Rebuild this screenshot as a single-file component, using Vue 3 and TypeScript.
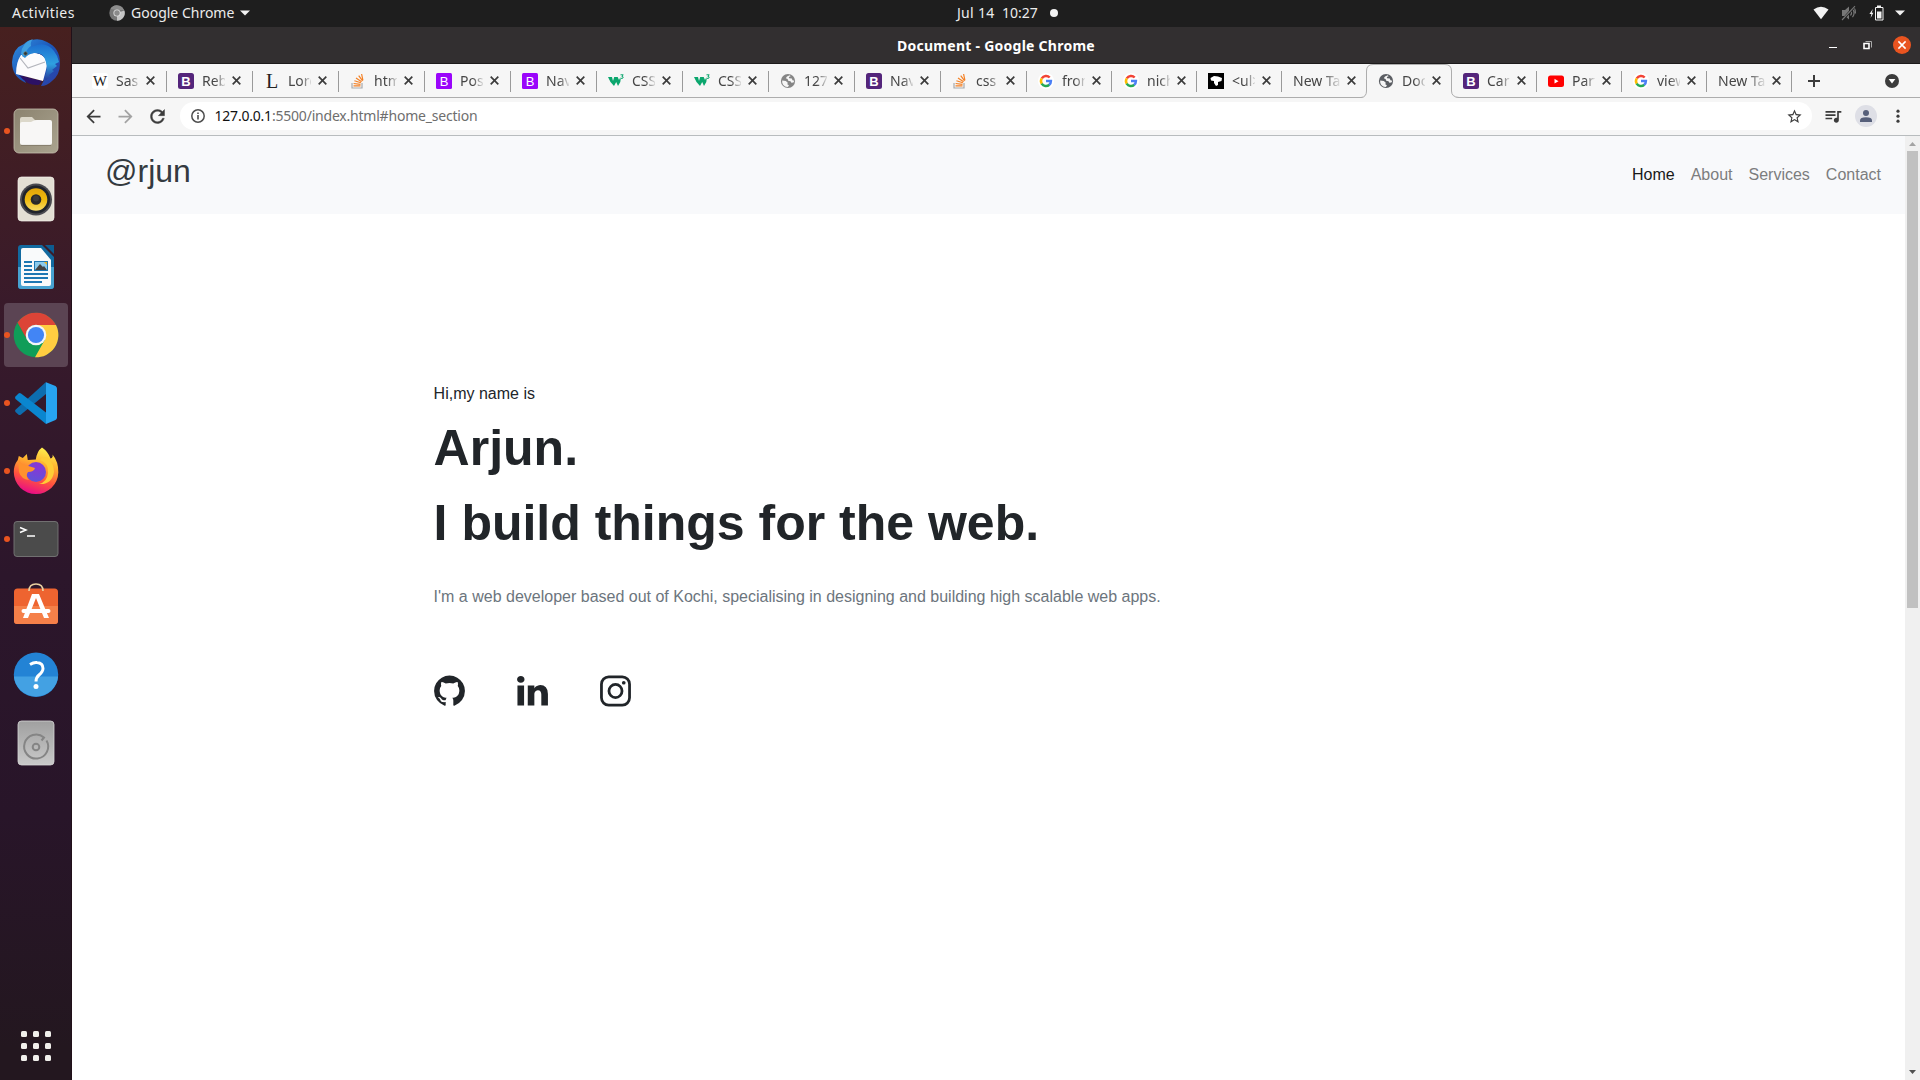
<script setup lang="ts">
interface Tab {
  title: string
  icon: string
  width: number
  active?: boolean
  last?: boolean
}

const tabs: Tab[] = [
  { title: 'Sass', icon: 'wiki', width: 86 },
  { title: 'Rebo', icon: 'boot', width: 86 },
  { title: 'Lore', icon: 'lorem', width: 86 },
  { title: 'html', icon: 'stack', width: 86 },
  { title: 'Post', icon: 'boot5', width: 86 },
  { title: 'Navb', icon: 'boot5', width: 86 },
  { title: 'CSS', icon: 'w3', width: 86 },
  { title: 'CSS', icon: 'w3', width: 86 },
  { title: '127.', icon: 'globe', width: 86 },
  { title: 'Navb', icon: 'boot', width: 86 },
  { title: 'css -', icon: 'stack', width: 86 },
  { title: 'fron', icon: 'google', width: 85 },
  { title: 'nich', icon: 'google', width: 85 },
  { title: '<ul>', icon: 'bull', width: 85 },
  { title: 'New Tab', icon: '', width: 85, last: true },
  { title: 'Docu', icon: 'globe', width: 85, active: true },
  { title: 'Care', icon: 'boot', width: 85 },
  { title: 'Parti', icon: 'youtube', width: 85 },
  { title: 'view', icon: 'google', width: 85 },
  { title: 'New Tab', icon: '', width: 85 },
]

const apps = [
  { name: 'thunderbird', running: false },
  { name: 'files', running: true },
  { name: 'rhythmbox', running: false },
  { name: 'writer', running: false },
  { name: 'chrome', running: true },
  { name: 'vscode', running: true },
  { name: 'firefox', running: true },
  { name: 'terminal', running: true },
  { name: 'software', running: false },
  { name: 'help', running: false },
  { name: 'disk', running: false },
]

const links = ['Home', 'About', 'Services', 'Contact']
</script>

<template>
  <div class="desktop">
    <header class="topbar">
      <span class="activities">Activities</span>
      <svg class="app-ico" width="16" height="16" viewBox="0 0 16 16">
        <circle cx="8" cy="8" r="7.7" fill="#777" />
        <path d="M8 8 15.4 5.6A7.7 7.7 0 0 1 8 15.7z" fill="#c4c4c4" />
        <path d="M1.4 4A7.7 7.7 0 0 1 15 5H8z" fill="#8d8d8d" />
        <circle cx="8" cy="8" r="3.6" fill="#ddd" />
        <circle cx="8" cy="8" r="2.7" fill="#8a8a8a" />
      </svg>
      <span class="app-name">Google Chrome</span>
      <svg class="caret" width="10" height="6" viewBox="0 0 10 6"><path d="M0 .5h10L5 5.5z" fill="#f2f2f2" /></svg>
      <span class="date">Jul 14</span>
      <span class="time">10:27</span>
      <i class="notice"></i>
      <div class="tray">
        <svg width="16" height="14" viewBox="0 0 16 14"><path d="M.5 3.6Q8-2.2 15.500 3.600L8 13.300z" fill="#f2f2f2" /></svg>
        <svg class="mute" width="16" height="16" viewBox="0 0 16 16">
          <path d="M1 5h3l4-3.500v13L4 11H1z" fill="#777" />
          <path d="M9.500 5.500q2 2.500 0 5M11.500 3.800q3.200 4.200 0 8.400M13 2.500q1.800 2.500 1.500 6" fill="none" stroke="#777" stroke-width="1.200" />
          <path d="M1.500 15 14 1" stroke="#1e1e1e" stroke-width="2.600" />
          <path d="M1 15 14 1.200" stroke="#777" stroke-width="1.100" />
        </svg>
        <svg class="battery" width="15" height="16" viewBox="0 0 15 16">
          <path d="M3.800 4 .4 9h2L1.600 13 4.400 7.700H2.800z" fill="#f2f2f2" />
          <path d="M6.500 2.500h7.500v12.500h-7.500z" fill="none" stroke="#f2f2f2" />
          <path d="M8 .5h4v2H8zM8 6.500h4.500v7H8z" fill="#f2f2f2" />
        </svg>
        <svg class="tray-caret" width="10" height="6" viewBox="0 0 10 6"><path d="M0 .5h10L5 5.500z" fill="#f2f2f2" /></svg>
      </div>
    </header>

    <div class="workspace">
      <aside class="dock">
        <div v-for="app in apps" :key="app.name" class="cell" :class="{ focused: app.name === 'chrome' }">
          <i v-if="app.running" class="running"></i>
          <svg v-if="app.name === 'thunderbird'" width="48" height="48" viewBox="0 0 48 48">
            <defs>
              <linearGradient id="tb" x1="0" y1="0" x2="1" y2="1"><stop offset="0" stop-color="#2f8fe0" /><stop offset=".5" stop-color="#1c55b8" /><stop offset="1" stop-color="#2d3fa5" /></linearGradient>
              <linearGradient id="tw" x1="0" y1="0" x2="0" y2="1"><stop offset="0" stop-color="#1d6fd0" /><stop offset=".55" stop-color="#2fa0e0" /><stop offset="1" stop-color="#243c9e" /></linearGradient>
            </defs>
            <path d="M20 1q8-2 15 2 13 6 13 21 0 12-8 18-5 5-11 5l3-6-22-6 4 9Q0 38 0 23 1 9 12 5q4-4 8-4z" fill="url(#tb)" />
            <path d="M7 36 30 42l-3 4Q15 47 7 36z" fill="#2c1165" />
            <path d="M14 16q10-5 19 2l2 9-4 15L4 35q0-12 5-19z" fill="#fbfbfd" />
            <path d="m8 19 8 10 17-6" fill="none" stroke="#b3b5bd" stroke-width="1.200" />
            <path d="M17 14q10-2 17 6-1-5-7-8z" fill="#2b1774" />
            <path d="M22 7q12-5 20 5 4 5 5 11l-4 2 2 2-5 4 2 1-5 4 1 2-4 3-2-1q5-11 1-20-3-7-11-6-6 1-9 5l-3-2Q13 8 22 7z" fill="url(#tw)" />
            <path d="M9 15Q10 3 21 0q-3 3-2 7-4 2-7 11z" fill="#3f9fe0" />
            <circle cx="13.500" cy="14.500" r="1.700" fill="#234" stroke="#7d7042" stroke-width=".7" />
          </svg>
          <svg v-else-if="app.name === 'files'" width="48" height="48" viewBox="0 0 48 48">
            <defs><linearGradient id="fl" x1="0" y1="0" x2="1" y2="1"><stop offset="0" stop-color="#8b836f" /><stop offset="1" stop-color="#aaa38f" /></linearGradient></defs>
            <rect x="2" y="2" width="44" height="44" rx="5" fill="url(#fl)" stroke="#c5bfae" stroke-width=".8" />
            <path d="M8 18v-6q0-2 2-2h10l3 3h6v5z" fill="#dcd8ca" />
            <path d="M8 17q0-2 2-2h9q3-2 6-2h13q2 0 2 2v21q0 2-2 2H10q-2 0-2-2z" fill="#f8f7f6" />
            <path d="M9 38.400h30" stroke="#7d7564" stroke-width=".8" />
          </svg>
          <svg v-else-if="app.name === 'rhythmbox'" width="48" height="48" viewBox="0 0 48 48">
            <defs><linearGradient id="rb" x1="0" y1="0" x2="0" y2="1"><stop offset="0" stop-color="#e0a40b" /><stop offset=".5" stop-color="#eeb90c" /><stop offset="1" stop-color="#f8dc65" /></linearGradient></defs>
            <rect x="6" y="2" width="36" height="44" rx="3.500" fill="#e3dfd4" stroke="#f6f4ee" stroke-width=".7" />
            <circle cx="24" cy="24.500" r="16" fill="#4b4b50" /><circle cx="24" cy="24.500" r="14" fill="#20242b" />
            <circle cx="24" cy="24.500" r="11.300" fill="url(#rb)" /><circle cx="24" cy="24.500" r="5.300" fill="#292929" />
            <circle cx="24" cy="23.500" r="3" fill="#3a3a3a" />
          </svg>
          <svg v-else-if="app.name === 'writer'" width="48" height="48" viewBox="0 0 48 48">
            <path d="M9 2h21l12 12v29q0 3-3 3H9q-3 0-3-3V5q0-3 3-3z" fill="#126aa0" />
            <path d="M6 24h36v19q0 3-3 3H9q-3 0-3-3z" fill="#47a2d1" />
            <path d="M11 5h18l10 12v24q0 2-2 2H11q-2 0-2-2V7q0-2 2-2z" fill="#f9fafb" />
            <path d="M33 2h9v9z" fill="#0d5c91" />
            <path d="M12 19h8M12 23h8M12 27h8M12 31h24M12 35h24M12 39h18" stroke="#1d77b3" stroke-width="2" />
            <rect x="22.500" y="18.500" width="13" height="9" fill="#8ccbed" stroke="#1d77b3" />
            <path d="m23 27 5-6 3 3 1-1 3 4z" fill="#444" /><path d="M32 19h3v3z" fill="#f0b31c" />
          </svg>
          <svg v-else-if="app.name === 'chrome'" width="48" height="48" viewBox="0 0 48 48">
            <circle cx="24" cy="24" r="22.300" fill="#109d58" />
            <path d="M5.500 11.500A22.300 22.300 0 0 1 43.900 14H24a10 10 0 0 0-9 14.500z" fill="#dc4437" />
            <path d="M24 14h20A22.300 22.300 0 0 1 23 46.300L33 28.500z" fill="#ffcd41" />
            <path d="m13 25-7-12 8.500 14z" fill="#a83025" />
            <circle cx="24" cy="24" r="10.300" fill="#f3f5f8" /><circle cx="24" cy="24" r="8.100" fill="#4285f5" />
          </svg>
          <svg v-else-if="app.name === 'vscode'" width="48" height="48" viewBox="0 0 48 48">
            <path d="M34 3v12L9 35.500q-1.500 1-2.700 0L3.500 33q-1-1.200 0-2.300z" fill="#0d6daf" />
            <path d="m3.500 17.500 3-3q1.200-.9 2.500 0L34 33.500V45L3.500 20q-1-1.300 0-2.500z" fill="#0a86cf" />
            <path d="M34 3.200 43.500 7Q45 8 45 9.500v29q0 1.500-1.500 2.500L34 45z" fill="#27a4f0" />
          </svg>
          <svg v-else-if="app.name === 'firefox'" width="48" height="48" viewBox="0 0 48 48">
            <defs>
              <linearGradient id="ff" x1=".7" y1="0" x2=".4" y2="1"><stop offset="0" stop-color="#fff44f" /><stop offset=".35" stop-color="#ffb02e" /><stop offset=".68" stop-color="#ff533e" /><stop offset="1" stop-color="#e80b87" /></linearGradient>
              <radialGradient id="fp" cx=".6" cy=".2" r=".9"><stop offset="0" stop-color="#8b35d5" /><stop offset="1" stop-color="#5b55d9" /></radialGradient>
            </defs>
            <path d="M30 .5q6 4 8.500 11 3-1 2-4 6 7 5.800 18A22 22 0 0 1 24 47 22 22 0 0 1 1.800 25q0-7 4-12l1-4 4 2 4-4 1 6 8-.5Q25 4 30 .5z" fill="url(#ff)" />
            <circle cx="24" cy="25" r="10" fill="url(#fp)" />
            <path d="M7 12q1 5 6 6l10 3q-1 4-7 4-3 4 1 8-8-1-10-8-1-7 0-13z" fill="#ff922d" />
            <path d="M28 13q9 3 8 13-1 9-9 11 13 1 15-12 0-8-6-14-5-3-8 2z" fill="#ffcd36" />
          </svg>
          <svg v-else-if="app.name === 'terminal'" width="48" height="48" viewBox="0 0 48 48">
            <rect x="2" y="6.500" width="44" height="35" rx="3" fill="#4b4b4b" stroke="#777" stroke-width=".9" />
            <path d="m8 12.500 6 2.500-6 2.500M15 21h8" fill="none" stroke="#fff" stroke-width="1.500" />
          </svg>
          <svg v-else-if="app.name === 'software'" width="48" height="48" viewBox="0 0 48 48">
            <rect x="2" y="5.500" width="44" height="35.500" rx="3.500" fill="#ee6430" /><path d="M2 23h44v15q0 3-3 3H5q-3 0-3-3z" fill="#f58049" />
            <path d="M17 8q0-7 7-7t7 7" fill="none" stroke="#ead0a1" stroke-width="1.700" />
            <path d="M20 11h7l10 24h-5l-8-20-8 20h-5z" fill="#fff" />
            <rect x="9.500" y="26" width="29" height="4" rx="2" fill="#fff" />
          </svg>
          <svg v-else-if="app.name === 'help'" width="48" height="48" viewBox="0 0 48 48">
            <circle cx="24" cy="23.700" r="22.200" fill="#2383d5" /><path d="M1.900 25.500h44.200a22.200 22.200 0 0 1-44.200 0z" fill="#43a1e3" />
            <path d="M18 13.500q4-2.500 7-2 6 .5 6 6 0 3-4 6.500-3 2.500-3 6.500" fill="none" stroke="#fff" stroke-width="3" /><circle cx="24" cy="35.500" r="2.500" fill="#fff" />
          </svg>
          <svg v-else width="48" height="48" viewBox="0 0 48 48">
            <defs><linearGradient id="dk" x1="0" y1="0" x2="0" y2="1"><stop offset="0" stop-color="#a0a0a0" /><stop offset="1" stop-color="#c9c9c9" /></linearGradient></defs>
            <rect x="6" y="2" width="36" height="44" rx="3.500" fill="url(#dk)" stroke="#d5d5d5" stroke-width=".8" />
            <path d="M34.500 21.500A12 12 0 1 1 32 18.500l-2.500 3" fill="none" stroke="#858585" stroke-width="2" />
            <circle cx="24" cy="28" r="3.300" fill="none" stroke="#858585" stroke-width="2" />
          </svg>
        </div>
        <div class="grid"><i v-for="n in 9" :key="n"></i></div>
      </aside>

      <main class="window">
        <div class="titlebar">
          <span class="title">Document - Google Chrome</span>
          <div class="controls">
            <i class="min"></i>
            <svg class="restore" width="9" height="9" viewBox="0 0 9 9"><path d="M1 2.500h5v5H1z" fill="none" stroke="#fff" stroke-width="1.600" /><path d="M2.500.5h6v6" fill="none" stroke="#aaa" /></svg>
            <svg width="18" height="18" viewBox="0 0 18 18"><circle cx="9" cy="9" r="9" fill="#e95420" /><path d="m5.400 5.400 7.200 7.200m0-7.200-7.200 7.200" stroke="#fff" stroke-width="1.500" /></svg>
          </div>
        </div>

        <div class="tabstrip">
          <div
            v-for="(tab, i) in tabs"
            :key="i"
            class="tab"
            :class="{ active: tab.active, bare: !tab.icon, nosep: tab.last || tab.active }"
            :style="{ width: tab.width + 'px' }"
          >
            <svg v-if="tab.active" class="outline" width="98" height="34" viewBox="0 0 98 34">
              <path d="M0 34Q5.500 33 5.500 27V7Q5.500.5 12 .5h72Q90.500.5 90.500 7v20q0 6 7.500 7z" fill="#f6f6f6" />
              <path d="M0 33.500Q5.500 33 5.500 27V7Q5.500.5 12 .5h72Q90.500.5 90.500 7v20q0 6 7.500 6.500" fill="none" stroke="#adadad" />
            </svg>
            <svg v-if="tab.icon" class="fav" width="16" height="16" viewBox="0 0 16 16">
              <template v-if="tab.icon === 'wiki'"><rect width="16" height="16" rx="3" fill="#fff" /><text x="8" y="13" text-anchor="middle" class="serif" font-size="14.500" textLength="14" lengthAdjust="spacingAndGlyphs">W</text></template>
              <template v-else-if="tab.icon === 'boot'"><rect width="16" height="16" rx="2.500" fill="#54257b" /><text x="8" y="12.700" text-anchor="middle" class="b" font-weight="700">B</text></template>
              <template v-else-if="tab.icon === 'boot5'"><rect width="16" height="16" rx="1.500" fill="#9a05fb" /><text x="8" y="12.700" text-anchor="middle" class="b">B</text></template>
              <text v-else-if="tab.icon === 'lorem'" x="8" y="14.500" text-anchor="middle" class="serif" font-size="20">L</text>
              <template v-else-if="tab.icon === 'stack'">
                <path d="M2 10v5h10v-5" fill="none" stroke="#a7a9ac" stroke-width="1.200" />
                <path d="M3.500 12.900h7M3.600 10.500l6.900.8M4.400 7.800l6.500 2M6 5l5.600 3.700M8.700 2.600l3.900 5.300M11.600 1l1.300 6.400" stroke="#f48024" stroke-width="1.200" />
              </template>
              <template v-else-if="tab.icon === 'w3'">
                <path d="M0 4h4l1 4 1.200-4h3.500L11 7l1-2 .7 1-.4 3L10 13 8.200 9 6 13 2.500 9z" fill="#0aa66d" /><path d="M12.500 1.800h2.700l-1.300 1.600q1.700.2 1.200 1.400-.9 1.200-2.600.3" fill="none" stroke="#0aa66d" />
              </template>
              <template v-else-if="tab.icon === 'globe'">
                <circle cx="8" cy="8" r="7.100" :fill="tab.active ? '#5b5e63' : '#858585'" />
                <path d="M9.800 2.200 7 3.500 5.800 5.300l1.800.7.6 1.800 2.300.4.900 1.600 2-.3 1-1.800-1.900-.5-.7-1.700-2.600-.3-.4-1.300 1.800-.7z" fill="#f6f6f6" />
                <path d="M2.200 7.500l3.600.5 2 1.700-.5 1.500 1.600 1-.9 1.900q-4.800-.3-5.800-4.600z" fill="#f6f6f6" />
              </template>
              <template v-else-if="tab.icon === 'google'">
                <circle cx="8" cy="8" r="8" fill="#fff" />
                <g fill="none" stroke-width="2.500"><path d="M3.800 5.400A5 5 0 0 1 11.700 4.500" stroke="#f24335" /><path d="M3.800 5.300a5 5 0 0 0 0 5.400" stroke="#fbbc05" /><path d="M3.700 10.600a5 5 0 0 0 7.600 1.100" stroke="#25a955" /><path d="M8 8h4.900q0 2.500-1.700 3.900" stroke="#4a7ff5" /></g>
              </template>
              <template v-else-if="tab.icon === 'bull'"><path d="M0 0h16v16H0z" /><path d="M2.500 5 6 3l4 .5L14 5l-.5 3-3.500 1v3l-2 1-2-3V8L3 7.500z" fill="#fff" /></template>
              <template v-else><rect y="2.500" width="16" height="11.500" rx="2.500" fill="#f00" /><path d="m6.500 5.800 4 2.400-4 2.400z" fill="#fff" /></template>
            </svg>
            <span class="label">{{ tab.title }}</span>
            <svg class="close" width="9" height="9" viewBox="0 0 9 9"><path d="m.7.7 7.600 7.600m0-7.600L.7 8.300" stroke="#3c3c3c" stroke-width="1.700" /></svg>
          </div>
          <svg class="plus" width="12" height="12" viewBox="0 0 12 12"><path d="M0 6h12M6 0v12" stroke="#3c3c3c" stroke-width="2" /></svg>
          <svg class="search-tabs" width="14" height="14" viewBox="0 0 14 14"><circle cx="7" cy="7" r="7" fill="#3c3c3c" /><path d="M3.600 5h6.800L7 9.500z" fill="#fff" /></svg>
        </div>

        <div class="toolbar">
          <svg class="nav-ico" width="21" height="21" viewBox="0 0 24 24"><path d="M20 11H7.830l5.590-5.590L12 4l-8 8 8 8 1.410-1.410L7.830 13H20v-2z" fill="#3c3c3c" /></svg>
          <svg class="nav-ico" width="21" height="21" viewBox="0 0 24 24"><path d="m12 4-1.410 1.410L16.170 11H4v2h12.170l-5.580 5.590L12 20l8-8z" fill="#a3a3a3" /></svg>
          <svg class="nav-ico" width="21" height="21" viewBox="0 0 24 24"><path d="M17.650 6.350C16.200 4.900 14.210 4 12 4c-4.420 0-7.990 3.580-7.990 8s3.570 8 7.990 8c3.730 0 6.840-2.550 7.730-6h-2.080c-.82 2.330-3.040 4-5.650 4-3.310 0-6-2.690-6-6s2.690-6 6-6c1.660 0 3.140.69 4.220 1.780L13 11h7V4l-2.350 2.350z" fill="#3c3c3c" stroke="#3c3c3c" stroke-width=".5" /></svg>
          <div class="omnibox">
            <svg width="14" height="14" viewBox="0 0 14 14"><circle cx="7" cy="7" r="6.200" fill="none" stroke="#4e4e4e" stroke-width="1.500" /><path d="M7 6v4.500M7 3.500v1.600" stroke="#4e4e4e" stroke-width="1.600" /></svg>
            <span class="host">127.0.0.1</span><span class="path">:5500/index.html#home_section</span>
            <svg class="star" width="17" height="17" viewBox="0 0 24 24"><path d="m22 9.240-7.190-.62L12 2 9.190 8.630 2 9.240l5.460 4.730L5.820 21 12 17.270 18.180 21l-1.630-7.030L22 9.240zM12 15.400l-3.760 2.270 1-4.280-3.320-2.880 4.380-.38L12 6.100l1.710 4.040 4.380.38-3.320 2.880 1 4.280L12 15.400z" fill="#3c3c3c" /></svg>
          </div>
          <svg class="media" width="20" height="20" viewBox="0 0 24 24"><path d="M15 6H3v2h12V6zm0 4H3v2h12v-2zM3 16h8v-2H3v2zM17 6v8.180c-.31-.11-.65-.18-1-.18-1.660 0-3 1.340-3 3s1.340 3 3 3 3-1.340 3-3V8h3V6h-5z" fill="#3c3c3c" /></svg>
          <svg class="avatar" width="22" height="22" viewBox="0 0 22 22"><circle cx="11" cy="11" r="11" fill="#dedfe6" /><circle cx="11" cy="8" r="3" fill="#565f7a" /><path d="M5 17v-1.500Q5 12.300 11 12.300t6 3.200V17z" fill="#565f7a" /></svg>
          <svg class="menu" width="4" height="14" viewBox="0 0 4 14"><g fill="#3c3c3c"><circle cx="2" cy="2.200" r="1.600" /><circle cx="2" cy="7.200" r="1.600" /><circle cx="2" cy="12.200" r="1.600" /></g></svg>
        </div>

        <div class="viewport">
          <div class="page">
            <nav class="navbar">
              <span class="brand">@rjun</span>
              <div class="links"><a v-for="(link, i) in links" :key="link" :class="{ current: i === 0 }">{{ link }}</a></div>
            </nav>
            <section class="hero">
              <p class="hi">Hi,my name is</p>
              <h1>Arjun.</h1>
              <h1>I build things for the web.</h1>
              <p class="bio">I'm a web developer based out of Kochi, specialising in designing and building high scalable web apps.</p>
              <div class="social">
                <svg width="31" height="36" viewBox="128 0 1536 1792"><path fill="#212529" d="M1664 896q0 251-146.500 451.500t-378.500 277.500q-27 5-40-7t-13-30q0-3 .5-76.500t.5-134.500q0-97-52-142 57-6 102.500-18t94-39 81-66.500 53-105 20.500-150.500q0-119-79-206 37-91-8-204-28-9-81 11t-92 44l-38 24q-93-26-192-26t-192 26q-16-11-42.500-27t-83.500-38.500-85-13.500q-45 113-8 204-79 87-79 206 0 85 20.500 150t52.500 105 80.500 67 94 39 102.500 18q-39 36-49 103-21 10-45 15t-57 5-65.500-21.500-55.500-62.500q-19-32-48.500-52t-49.500-24l-20-3q-21 0-29 4.500t-5 11.500 9 14 13 12l7 5q22 10 43.500 38t31.500 51l10 23q13 38 44 61.500t67 30 69.500 7 55.500-3.500l23-4q0 38 .5 88.500t.5 54.500q0 18-13 30t-40 7q-232-77-378.500-277.500t-146.500-451.500q0-209 103-385.500t279.500-279.500 385.500-103 385.500 103 279.500 279.500 103 385.500z" /></svg>
                <svg width="31" height="36" viewBox="128 0 1536 1792"><path fill="#212529" d="M477 625v991h-330v-991h330zm21-306q1 73-50.500 122t-135.500 49h-2q-82 0-132-49t-50-122q0-74 51.500-122.500t134.500-48.500 133 48.500 51 122.500zm1166 729v568h-329v-530q0-105-40.500-164.500t-126.500-59.500q-63 0-105.500 34.500t-63.500 85.500q-11 30-11 81v553h-329q2-399 2-647t-1-296l-1-48h329v144h-2q20-32 41-56t56.500-52 87-43.500 114.500-15.500q171 0 275 113.500t104 332.500z" /></svg>
                <svg width="31" height="36" viewBox="128 0 1536 1792"><g fill="none" stroke="#212529"><rect x="197" y="197" width="1398" height="1398" rx="360" stroke-width="138" /><circle cx="896" cy="896" r="325" stroke-width="138" /></g><circle cx="1306" cy="486" r="92" fill="#212529" /></svg>
              </div>
            </section>
          </div>
          <div class="scrollbar">
            <svg class="up" width="7" height="4" viewBox="0 0 7 4"><path d="M3.500 0 7 4H0z" fill="#a3a3a3" /></svg>
            <div class="thumb"></div>
            <svg class="down" width="7" height="4" viewBox="0 0 7 4"><path d="M0 0h7L3.500 4z" fill="#505050" /></svg>
          </div>
        </div>
      </main>
    </div>
  </div>
</template>

<style>
body {
  margin: 0;
  overflow: hidden;
}
</style>

<style scoped>
* {
  box-sizing: border-box;
}
svg {
  display: block;
  flex: none;
}
.desktop {
  width: 1920px;
  height: 1080px;
  display: flex;
  flex-direction: column;
  font-family: 'Noto Sans', 'Open Sans', sans-serif;
  overflow: hidden;
}
.topbar {
  height: 27px;
  flex: none;
  display: flex;
  align-items: center;
  background: #1e1e1e;
  color: #ececec;
  font-size: 14px;
  line-height: 24px;
  padding-bottom: 1px;
  white-space: pre;
}
.activities {
  width: 97px;
  padding-left: 12px;
  letter-spacing: 0.45px;
}
.app-ico {
  margin-left: 12px;
}
.app-name {
  width: 104px;
  margin-left: 6px;
}
.caret {
  margin-left: 5px;
}
.date {
  width: 45px;
  margin-left: 707px;
  letter-spacing: 0.3px;
}
.time {
  width: 48px;
}
.notice {
  width: 8px;
  height: 8px;
  border-radius: 50%;
  background: #f2f2f2;
}
.tray {
  margin-left: auto;
  margin-right: 15px;
  display: flex;
  align-items: center;
}
.mute {
  margin-left: 12px;
}
.battery {
  margin-left: 12px;
}
.tray-caret {
  margin-left: 11px;
}
.workspace {
  flex: 1;
  display: flex;
  min-height: 0;
}
.dock {
  width: 72px;
  flex: none;
  padding-top: 2px;
  display: flex;
  flex-direction: column;
  background: linear-gradient(#47201f, #381a2b 28%, #2c162b 52%, #281529 75%, #23171f 97%);
  border-right: 1px solid #211019;
}
.cell {
  width: 64px;
  height: 64px;
  margin: 2px 0 2px 4px;
  flex: none;
  border-radius: 4px;
  display: flex;
  align-items: center;
  justify-content: center;
  position: relative;
}
.focused {
  background: #5b4453;
}
.running {
  position: absolute;
  left: 0;
  top: 29px;
  width: 6px;
  height: 6px;
  border-radius: 50%;
  background: #e95420;
}
.grid {
  margin: auto 0 19px 21px;
  display: grid;
  grid-template-columns: repeat(3, 6px);
  gap: 6px;
}
.grid i {
  height: 6px;
  border-radius: 1.5px;
  background: #f0efeb;
}
.window {
  flex: 1;
  min-width: 0;
  display: flex;
  flex-direction: column;
}
.titlebar {
  height: 37px;
  flex: none;
  background: #322f30;
  border-bottom: 1px solid #1c1a1b;
  display: flex;
  align-items: center;
}
.title {
  width: 200px;
  margin-left: 825px;
  color: #fff;
  font-size: 14px;
  font-weight: 700;
  letter-spacing: 0.26px;
  white-space: nowrap;
}
.controls {
  margin-left: auto;
  margin-right: 9px;
  display: flex;
  align-items: center;
}
.min {
  width: 8px;
  height: 1px;
  margin-top: 4px;
  background: #fff;
}
.restore {
  margin: 0 21px 0 26px;
}
.tabstrip {
  height: 34px;
  flex: none;
  display: flex;
  align-items: center;
  padding-left: 9px;
  background: #f6f6f6;
  border-bottom: 1px solid #adadad;
}
.tab {
  height: 34px;
  flex: none;
  display: flex;
  align-items: center;
  padding: 0 11px;
  position: relative;
  color: #464646;
  font-size: 14px;
}
.tab:not(.nosep)::after {
  content: '';
  position: absolute;
  right: 0;
  top: 7px;
  width: 1px;
  height: 21px;
  background: #9a9a9a;
}
.outline {
  position: absolute;
  left: -6px;
  top: 0;
}
.fav {
  position: relative;
}
.b {
  fill: #fff;
  font: 13px 'Liberation Sans', sans-serif;
}
.b[font-weight] {
  font-weight: 700;
}
.serif {
  font-family: 'Liberation Serif', serif;
  fill: #222;
}
.label {
  width: 23px;
  margin-left: 8px;
  overflow: hidden;
  white-space: nowrap;
  position: relative;
  line-height: 32px;
  -webkit-mask-image: linear-gradient(90deg, #000 55%, rgba(0, 0, 0, 0.15));
  mask-image: linear-gradient(90deg, #000 55%, rgba(0, 0, 0, 0.15));
}
.bare .label {
  width: 47px;
  margin-left: 0;
  -webkit-mask-image: linear-gradient(90deg, #000 64%, rgba(0, 0, 0, 0.1));
  mask-image: linear-gradient(90deg, #000 64%, rgba(0, 0, 0, 0.1));
}
.close {
  margin-left: 7px;
  position: relative;
}
.plus {
  margin-left: 16px;
}
.search-tabs {
  margin-left: auto;
  margin-right: 21px;
}
.toolbar {
  height: 38px;
  flex: none;
  display: flex;
  align-items: center;
  background: #f6f6f6;
  border-bottom: 1px solid #b8bcbe;
  padding: 0 0 1px 11px;
}
.nav-ico {
  margin-right: 11px;
}
.omnibox {
  width: 1632px;
  height: 28px;
  margin-left: 1px;
  border-radius: 14px;
  background: #fff;
  display: flex;
  align-items: center;
  padding: 0 9px 0 11px;
  font-size: 14px;
  line-height: 26px;
  letter-spacing: -0.21px;
}
.host {
  margin-left: 9.5px;
  color: #111;
}
.path {
  color: #6e6e6e;
}
.star {
  margin-left: auto;
}
.media {
  margin-left: 11px;
}
.avatar {
  margin-left: 12px;
}
.menu {
  margin-left: 19px;
}
.viewport {
  flex: 1;
  min-height: 0;
  display: flex;
}
.page {
  flex: 1;
  background: #fff;
  font-family: 'Liberation Sans', sans-serif;
  color: #212529;
}
.navbar {
  height: 78px;
  background: #f8f9fb;
  display: flex;
  justify-content: space-between;
  padding: 0 24px 0 33px;
}
.brand {
  font-size: 32px;
  line-height: 70px;
  color: #343a40;
}
.links {
  display: flex;
  gap: 16px;
  font-size: 16px;
  line-height: 77px;
  color: #7c7d7e;
}
.links .current {
  color: #191919;
}
.hero {
  padding: 167px 0 0 361.6px;
}
.hero p,
.hero h1 {
  margin: 0;
}
.hi {
  font-size: 16px;
  line-height: 24px;
  padding-top: 1px;
}
h1 {
  font-size: 50px;
  line-height: 60px;
  margin-top: 12px !important;
}
h1 + h1 {
  margin-top: 15px !important;
}
.bio {
  padding-top: 32px;
  font-size: 16px;
  line-height: 24px;
  color: #6c757d;
}
.social {
  display: flex;
  gap: 52.4px;
  padding-top: 64px;
}
.scrollbar {
  width: 15px;
  background: #f0f0f0;
  display: flex;
  flex-direction: column;
  align-items: center;
}
.up {
  margin-top: 6px;
}
.thumb {
  width: 11px;
  height: 457px;
  margin-top: 5px;
  background: #c1c1c1;
}
.down {
  margin-top: auto;
  margin-bottom: 6px;
}
</style>
